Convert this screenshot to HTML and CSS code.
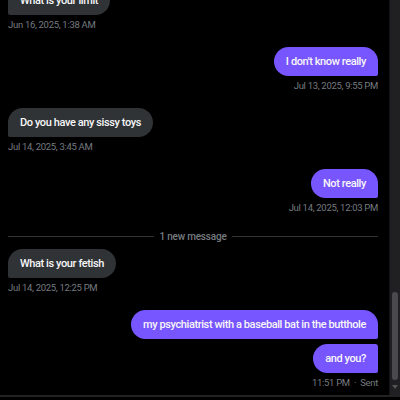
FILE: index.html
```html
<!DOCTYPE html>
<html>
<head>
<meta charset="utf-8">
<link rel="stylesheet" href="styles.css">
</head>
<body>
<div class="frame">
  <div class="chat">
    <div class="group in">
      <div class="bubble in-b">What is your limit</div>
      <div class="ts">Jun 16, 2025, 1:38 AM</div>
    </div>
    <div class="group out">
      <div class="bubble out-b">I don't know really</div>
      <div class="ts">Jul 13, 2025, 9:55 PM</div>
    </div>
    <div class="group in">
      <div class="bubble in-b">Do you have any sissy toys</div>
      <div class="ts">Jul 14, 2025, 3:45 AM</div>
    </div>
    <div class="group out">
      <div class="bubble out-b">Not really</div>
      <div class="ts">Jul 14, 2025, 12:03 PM</div>
    </div>
    <div class="divider"><span class="line"></span><span class="dtext">1 new message</span><span class="line"></span></div>
    <div class="group in">
      <div class="bubble in-b">What is your fetish</div>
      <div class="ts">Jul 14, 2025, 12:25 PM</div>
    </div>
    <div class="group out last">
      <div class="bubble out-b first">my psychiatrist with a baseball bat in the butthole</div>
      <div class="bubble out-b next">and you?</div>
      <div class="ts">11:51 PM <span class="dot">·</span> Sent</div>
    </div>
  </div>
  <div class="scrollbar">
    <div class="track"></div>
    <div class="thumb"></div>
    <div class="arrow"></div>
  </div>
</div>
<div class="bottom-line"></div>
</body>
</html>
```

FILE: styles.css
```css
html, body {
  margin: 0;
  padding: 0;
  background: #000;
  width: 400px;
  height: 400px;
  overflow: hidden;
  font-family: Roboto, "Liberation Sans", sans-serif;
}

.frame {
  display: flex;
  height: 395px;
}

.chat {
  flex: 1;
  display: flex;
  flex-direction: column;
  justify-content: flex-end;
  overflow: hidden;
  padding: 0 11px 5px 8px;
}

.group {
  display: flex;
  flex-direction: column;
  margin-bottom: 15px;
}

.group.last {
  margin-bottom: 0;
}

.group.in {
  align-items: flex-start;
}

.group.out {
  align-items: flex-end;
}

.bubble {
  flex: none;
  height: 29px;
  line-height: 29px;
  padding: 0 12px;
  font-size: 11px;
  font-weight: 500;
  letter-spacing: -0.4px;
  color: #f7f7f8;
  border-radius: 15px;
  white-space: nowrap;
}

.in-b {
  background: #2f3336;
  border-bottom-left-radius: 2px;
}

.out-b {
  background: #7856ff;
  border-bottom-right-radius: 2px;
}

.out-b.next {
  margin-top: 5px;
  border-top-right-radius: 3px;
}

.ts {
  margin-top: 3px;
  height: 14px;
  line-height: 14px;
  font-size: 9.5px;
  letter-spacing: -0.3px;
  color: #767b80;
}

.dot {
  margin: 0 2px;
}

.divider {
  display: flex;
  align-items: center;
  gap: 5px;
  height: 14px;
  margin-top: 1px;
}

.divider .line {
  flex: 1;
  height: 1px;
  background: #2f3336;
}

.dtext {
  font-size: 10px;
  letter-spacing: -0.2px;
  font-weight: 500;
  color: #767b80;
}

.divider + .group {
  margin-top: 7px;
}

.scrollbar {
  width: 11px;
  flex: none;
  display: flex;
  flex-direction: column;
  align-items: center;
  background: #202023;
  border-left: 1px solid #141416;
  box-sizing: border-box;
}

.track {
  flex: 1;
}

.thumb {
  width: 6px;
  height: 88px;
  border-radius: 3px;
  background: #4a4a4e;
}

.arrow {
  width: 0;
  height: 0;
  margin: 5px 0 6px;
  border-left: 3px solid transparent;
  border-right: 3px solid transparent;
  border-top: 4px solid #555;
}

.bottom-line {
  height: 2px;
  background: #222;
}
```
